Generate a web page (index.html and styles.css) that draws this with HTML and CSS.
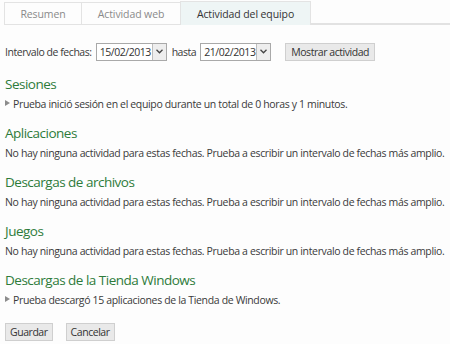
FILE: index.html
```html
<!DOCTYPE html>
<html lang="es">
<head>
<meta charset="utf-8">
<link rel="stylesheet" href="styles.css">
</head>
<body>
<div class="tabs">
  <div class="tab">Resumen</div>
  <div class="tab">Actividad web</div>
  <div class="tab active">Actividad del equipo</div>
  <div class="tab-fill"></div>
</div>
<div class="range">
  <span>Intervalo de fechas:</span>
  <div class="select"><span class="val">15/02/2013</span><span class="arrow"><svg width="7" height="5" viewBox="0 0 7 5"><path d="M0.5 0.8 L3.5 3.8 L6.5 0.8" fill="none" stroke="#444" stroke-width="1.3"/></svg></span></div>
  <span>hasta</span>
  <div class="select"><span class="val">21/02/2013</span><span class="arrow"><svg width="7" height="5" viewBox="0 0 7 5"><path d="M0.5 0.8 L3.5 3.8 L6.5 0.8" fill="none" stroke="#444" stroke-width="1.3"/></svg></span></div>
  <button class="btn show">Mostrar actividad</button>
</div>
<section class="sec">
  <h2>Sesiones</h2>
  <p class="expand"><span class="tri"></span>Prueba inició sesión en el equipo durante un total de 0 horas y 1 minutos.</p>
</section>
<section class="sec">
  <h2>Aplicaciones</h2>
  <p>No hay ninguna actividad para estas fechas. Prueba a escribir un intervalo de fechas más amplio.</p>
</section>
<section class="sec">
  <h2>Descargas de archivos</h2>
  <p>No hay ninguna actividad para estas fechas. Prueba a escribir un intervalo de fechas más amplio.</p>
</section>
<section class="sec">
  <h2>Juegos</h2>
  <p>No hay ninguna actividad para estas fechas. Prueba a escribir un intervalo de fechas más amplio.</p>
</section>
<section class="sec">
  <h2>Descargas de la Tienda Windows</h2>
  <p class="expand"><span class="tri"></span>Prueba descargó 15 aplicaciones de la Tienda de Windows.</p>
</section>
<div class="actions">
  <button class="btn">Guardar</button>
  <button class="btn">Cancelar</button>
</div>
</body>
</html>
```
FILE: styles.css
```css
html, body { margin: 0; padding: 0; }
body {
  background: #fdfdfd;
  font-family: "Open Sans", "Noto Sans", sans-serif;
  font-size: 10.5px;
  letter-spacing: -0.35px;
  color: #3a3a3a;
  width: 450px;
  height: 344px;
  overflow: hidden;
}
.tabs {
  display: flex;
  padding: 1px 0 0 4px;
  height: 24px;
}
.tab {
  box-sizing: border-box;
  height: 23px;
  margin-top: 1px;
  border: 1px solid #e3e3e3;
  border-right: none;
  display: flex;
  align-items: center;
  justify-content: center;
  color: #8a8a8a;
  font-size: 10.5px;
  letter-spacing: -0.1px;
  background: #fdfdfd;
}
.tab:nth-child(1) { width: 77px; }
.tab:nth-child(2) { width: 99px; }
.tab.active {
  width: 131px;
  height: 24px;
  margin-top: 0;
  background: #eef5f5;
  color: #333;
  border-right: 1px solid #e3e3e3;
  border-bottom: none;
}
.tab-fill {
  flex: 1;
  border-bottom: 2px solid #e2e2e2;
  box-sizing: border-box;
  height: 24px;
}
.range {
  display: flex;
  align-items: center;
  padding: 17px 0 0 5px;
  height: 19px;
  letter-spacing: -0.45px;
}
.range > span { margin-right: 4px; }
.select {
  box-sizing: border-box;
  display: flex;
  height: 18px;
  width: 71px;
  border: 1px solid #a9a9a9;
  background: #fff;
  margin-right: 5px;
}
.select .val {
  flex: 1;
  padding-left: 3px;
  line-height: 16px;
  color: #333;
}
.select .arrow {
  width: 13px;
  border-left: 1px solid #bdbdbd;
  background: #eeeeee;
  display: flex;
  align-items: center;
  justify-content: center;
}
.btn {
  font-family: inherit;
  font-size: 10.5px;
  letter-spacing: -0.45px;
  color: #333;
  background: #e9e9e9;
  border: 1px solid #cfcfcf;
  height: 18px;
  margin: 0;
  padding: 0 4px;
  line-height: 14px;
}
.btn.show { margin-left: 9px; padding: 0 5px; }
.sec { padding: 0 5px; margin-bottom: 9px; }
.sec h2 {
  margin: 0;
  font-weight: normal;
  font-size: 13.5px;
  letter-spacing: -0.5px;
  color: #2e7b3a;
  height: 20px;
  line-height: 20px;
}
.sec:first-of-type { margin-top: 13px; }
.sec p {
  margin: 0;
  height: 20px;
  line-height: 20px;
  white-space: nowrap;
}
.sec p.expand { display: flex; align-items: center; }
.tri {
  display: inline-block;
  width: 0; height: 0;
  border-left: 5px solid #8c8c8c;
  border-top: 3px solid transparent;
  border-bottom: 3px solid transparent;
  margin: -3px 3px 0 0;
}
.actions {
  display: flex;
  gap: 13px;
  padding: 4px 0 0 5px;
}
```
